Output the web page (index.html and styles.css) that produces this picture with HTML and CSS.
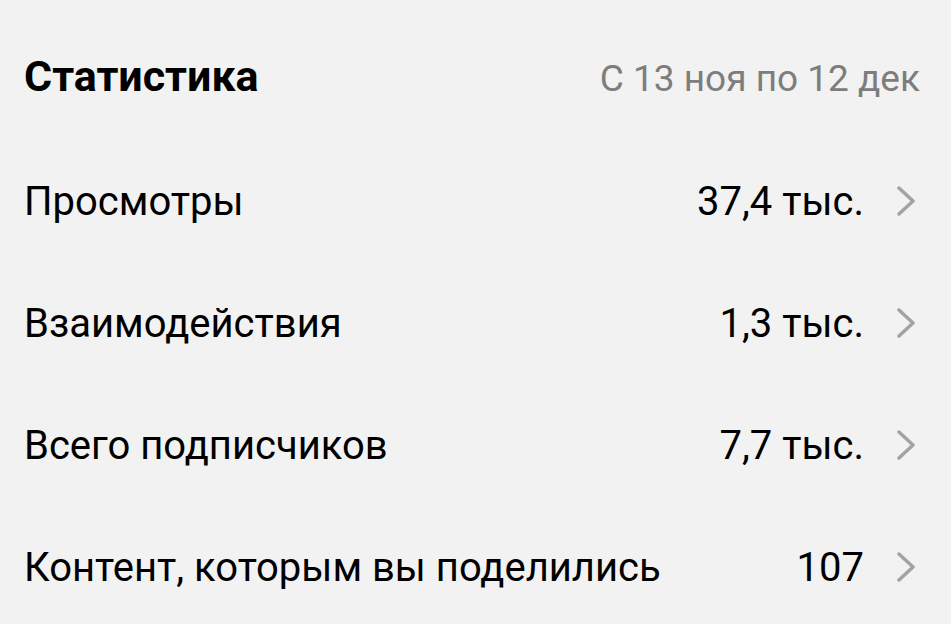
FILE: index.html
```html
<!DOCTYPE html>
<html lang="ru">
<head>
<meta charset="utf-8">
<link rel="stylesheet" href="styles.css">
</head>
<body>
<div class="page">
  <div class="header">
    <h1 class="title">Статистика</h1>
    <span class="range">С 13 ноя по 12 дек</span>
  </div>
  <ul class="list">
    <li class="row"><span class="label">Просмотры</span><span class="value">37,4 тыс.</span><svg class="chev" viewBox="0 0 18 30"><path d="M2 2 L16 15 L2 28" fill="none" stroke="currentColor" stroke-width="3.5" stroke-linecap="round" stroke-linejoin="round"/></svg></li>
    <li class="row"><span class="label">Взаимодействия</span><span class="value">1,3 тыс.</span><svg class="chev" viewBox="0 0 18 30"><path d="M2 2 L16 15 L2 28" fill="none" stroke="currentColor" stroke-width="3.5" stroke-linecap="round" stroke-linejoin="round"/></svg></li>
    <li class="row"><span class="label">Всего подписчиков</span><span class="value">7,7 тыс.</span><svg class="chev" viewBox="0 0 18 30"><path d="M2 2 L16 15 L2 28" fill="none" stroke="currentColor" stroke-width="3.5" stroke-linecap="round" stroke-linejoin="round"/></svg></li>
    <li class="row"><span class="label">Контент, которым вы поделились</span><span class="value">107</span><svg class="chev" viewBox="0 0 18 30"><path d="M2 2 L16 15 L2 28" fill="none" stroke="currentColor" stroke-width="3.5" stroke-linecap="round" stroke-linejoin="round"/></svg></li>
  </ul>
</div>
</body>
</html>
```

FILE: styles.css
```css
html, body {
  margin: 0;
  padding: 0;
  background: #f2f2f2;
}
body {
  font-family: Roboto, "Liberation Sans", sans-serif;
  color: #000;
  width: 951px;
  height: 624px;
  overflow: hidden;
}
.page {
  padding: 0 31px 0 24px;
}
.header {
  display: flex;
  align-items: baseline;
  justify-content: space-between;
  height: 140px;
}
.title {
  margin: 0;
  font-size: 43px;
  font-weight: 700;
  line-height: 152px;
}
.range {
  font-size: 37px;
  color: #7d7d7d;
}
.list {
  list-style: none;
  margin: 0;
  padding: 0;
}
.row {
  display: flex;
  align-items: center;
  height: 122px;
  font-size: 40px;
}
.label {
  flex: 1;
}
.value {
  margin-right: 33px;
}
.chev {
  width: 18px;
  height: 30px;
  color: #a3a3a3;
  margin-right: 5px;
}
```
